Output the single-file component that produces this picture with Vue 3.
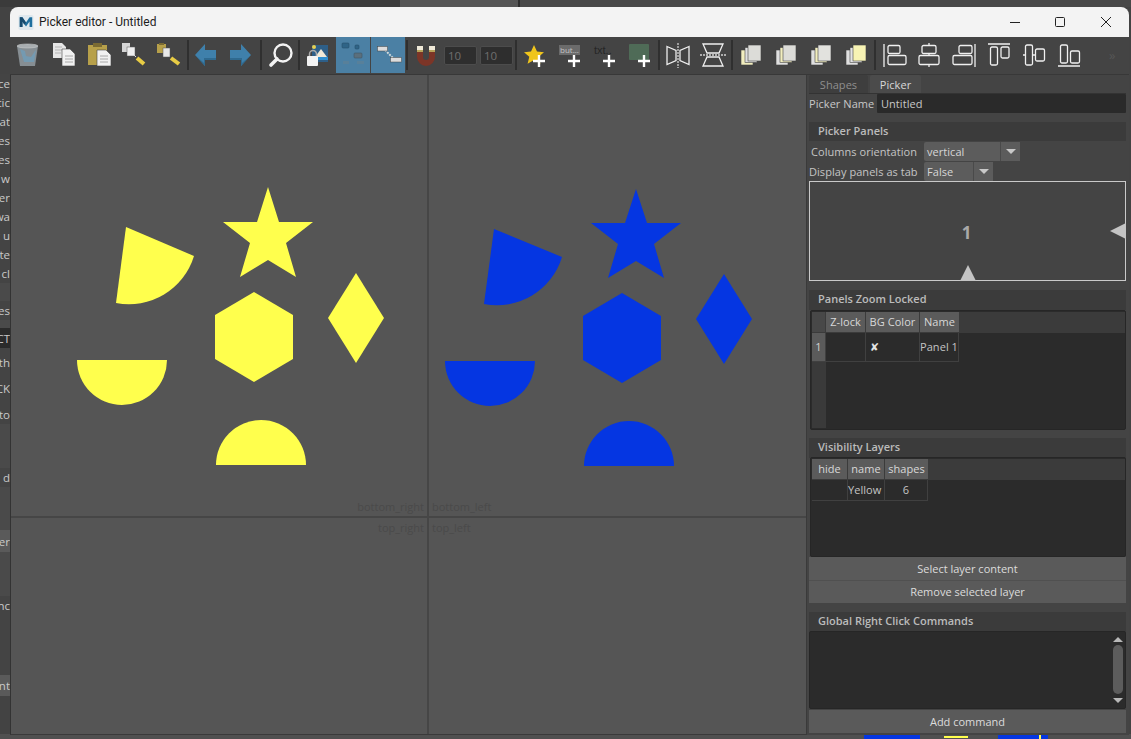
<script setup>
const leftRows = [
  { t: 'nce', h: 19 }, { t: 'tic', h: 19 }, { t: 'at', h: 19 }, { t: 'nes', h: 19 }, { t: 'es', h: 19 },
  { t: 'w', h: 19 }, { t: 'cer', h: 19 }, { t: 'wa', h: 19 }, { t: 't u', h: 19 }, { t: 'fte', h: 19 },
  { t: 'cl', h: 19 }, { t: '', h: 18, c: 'mid' }, { t: 'es', h: 19 }, { t: '', h: 8, c: 'mid' },
  { t: 'CT', h: 20, c: 'dark' }, { t: '', h: 5 }, { t: 'ath', h: 19 }, { t: '', h: 7 }, { t: 'CK', h: 19 },
  { t: '', h: 7 }, { t: 'to', h: 19 }, { t: '', h: 44, c: 'mid' }, { t: 'd', h: 19 }, { t: '', h: 43, c: 'mid' },
  { t: 'ter', h: 22, c: 'light' }, { t: '', h: 44, c: 'mid' }, { t: 'nc', h: 19 }, { t: '', h: 60 },
  { t: 'nt', h: 21, c: 'light' },
]
</script>

<template>
  <div class="desktop">
    <div class="top-strip"><span class="ts a"></span><span class="ts b"></span><span class="ts c"></span></div>
    <div class="left-strip">
      <div v-for="(r, i) in leftRows" :key="i" class="lrow" :class="r.c" :style="{ height: r.h + 'px' }">{{ r.t }}</div>
    </div>
    <div class="bottom-strip">
      <span class="bb b1"></span><span class="bb y1"></span><span class="bb b2"></span><span class="bb y2"></span>
    </div>

    <div class="window">
      <header class="titlebar">
        <svg class="app-icon" width="16" height="17" viewBox="0 0 18 18">
          <rect x="0.5" y="0.5" width="17" height="17" rx="2" fill="#dfe8ee" />
          <path d="M2 14V3h3l4 6 4-6h3v11h-3V8l-4 5.5L5 8v6z" fill="#1f6f9e" />
          <path d="M2 14V3h3l4 6-2 2.5L5 8v6z" fill="#174a6e" />
        </svg>
        <span class="title">Picker editor - Untitled</span>
        <div class="controls">
          <svg width="12" height="12" viewBox="0 0 12 12" class="ctl min"><path d="M1 6.5h10" stroke="#222" stroke-width="1" /></svg>
          <svg width="12" height="12" viewBox="0 0 12 12" class="ctl max"><rect x="1.5" y="1.5" width="9" height="9" rx="1" fill="none" stroke="#222" /></svg>
          <svg width="12" height="12" viewBox="0 0 12 12" class="ctl cls"><path d="M1 1l10 10M11 1L1 11" stroke="#222" stroke-width="1" /></svg>
        </div>
      </header>

      <div class="toolbar">
        <!-- trash -->
        <div class="tool w34"><svg viewBox="0 0 28 28"><path d="M4 5h21l-3 20H7z" fill="#868e93" /><path d="M7 8l5 2 1 5 5 1 4-6 1-1-2 12H11z" fill="#6d9dbb" opacity=".75" /><ellipse cx="14.500" cy="5" rx="10.500" ry="2" fill="#a8adb0" stroke="#c4c7c9" stroke-width=".6" /></svg></div>
        <!-- copy -->
        <div class="tool w40"><svg viewBox="0 0 28 28"><path d="M3 2h9l4 4v11H3z" fill="#e6e6e6" /><path d="M5 6h7M5 9h7M5 12h6" stroke="#b4b4b4" /><path d="M12 8h8l5 5v12H12z" fill="#f1f1f1" stroke="#444" stroke-width=".6" /><path d="M15 15h8M15 18h8M15 21h8" stroke="#a8a8a8" /></svg></div>
        <!-- paste -->
        <div class="tool w30"><svg viewBox="0 0 28 28"><rect x="3" y="4" width="19" height="20" fill="#b7a04a" /><rect x="8" y="2" width="9" height="4" fill="#7b6b33" /><path d="M12 9h9l5 5v11H12z" fill="#f1f1f1" stroke="#444" stroke-width=".6" /><path d="M15 15h8M15 18h8M15 21h8" stroke="#a8a8a8" /></svg></div>
        <!-- key copy -->
        <div class="tool w38"><svg viewBox="0 0 28 28"><rect x="3" y="2" width="8" height="9" fill="#d5d5d5" /><rect x="8" y="6" width="8" height="9" fill="#efefef" stroke="#555" stroke-width=".5" /><path d="M15 14l2 2" stroke="#ddd" stroke-width="1" /><path d="M18 17l7 6" stroke="#e8cc45" stroke-width="4" /></svg></div>
        <!-- key paste -->
        <div class="tool w30"><svg viewBox="0 0 28 28"><rect x="4" y="3" width="9" height="9" fill="#b7a04a" /><rect x="6" y="2" width="5" height="2" fill="#7b6b33" /><rect x="10" y="7" width="7" height="9" fill="#e8e8e8" stroke="#555" stroke-width=".5" /><path d="M18 17l8 6" stroke="#e8cc45" stroke-width="4" /></svg></div>
        <div class="sep m5"></div>
        <!-- arrows -->
        <div class="tool w32"><svg viewBox="0 0 28 28"><path d="M4 14L14 3v6h11v10H14v6z" fill="#3f80ab" /><path d="M4 14l10 11v-6h11v-2H13v5z" fill="#2f6a90" /></svg></div>
        <div class="tool w36"><svg viewBox="0 0 28 28"><path d="M26 14L16 3v6H5v10h11v6z" fill="#3f80ab" /><path d="M26 14L16 25v-6H5v-2h12v5z" fill="#2f6a90" /></svg></div>
        <div class="sep m3"></div>
        <!-- magnifier -->
        <div class="tool w36"><svg viewBox="0 0 28 28"><circle cx="17" cy="12" r="8.500" fill="none" stroke="#f3f3f3" stroke-width="2.400" /><path d="M11 18l-6 6" stroke="#f3f3f3" stroke-width="3.600" stroke-linecap="round" /></svg></div>
        <div class="sep"></div>
        <!-- lock + picture -->
        <div class="tool w36"><svg viewBox="0 0 28 28"><rect x="8" y="4" width="16" height="17" fill="#2e5f88" /><path d="M8 16h16v3H8z" fill="#2f8fd0" /><path d="M11 16l6-8 6 8z" fill="#efe9d8" /><circle cx="10" cy="6" r="2" fill="#e8d050" /><path d="M5.500 16v-3a3.500 3.500 0 017 0v3" fill="none" stroke="#aaa" stroke-width="1.500" /><rect x="3" y="15" width="11" height="10" rx="1" fill="#f3f3f3" /></svg></div>
        <div class="tool w34 on"><svg viewBox="0 0 28 28"><rect x="3" y="2" width="7" height="5" rx="1" fill="#2f6487" stroke="#254f6c" stroke-width=".6" /><rect x="16" y="4" width="4" height="4" rx="1" fill="#2f6487" stroke="#254f6c" stroke-width=".6" /><rect x="15" y="12" width="8" height="5" rx="1" fill="#5a6f7d" stroke="#3f5565" stroke-width=".6" /><rect x="4" y="20" width="6" height="3" fill="#58809a" /><rect x="18" y="20" width="7" height="3" fill="#58809a" /></svg></div>
        <div class="tool w34 on g1"><svg viewBox="0 0 28 28"><path d="M11 9l9 9" stroke="#cfd8dc" stroke-width="2" stroke-dasharray="2 1" /><rect x="3.500" y="5.500" width="10" height="4.500" fill="#dcdcdc" stroke="#444" stroke-width=".5" /><rect x="16.500" y="16.500" width="11" height="4.500" fill="#dcdcdc" stroke="#444" stroke-width=".5" /></svg></div>
        <div class="sep m1"></div>
        <!-- magnet -->
        <div class="tool w36"><svg viewBox="0 0 28 28"><path d="M8 11v5a6 6 0 0012 0v-5" fill="none" stroke="#7c3527" stroke-width="6" /><rect x="5" y="5" width="6" height="6" fill="#efe9d8" /><rect x="17" y="5" width="6" height="6" fill="#efe9d8" /><rect x="5" y="9" width="6" height="2" fill="#b8a45a" /><rect x="17" y="9" width="6" height="2" fill="#b8a45a" /></svg></div>
        <div class="numfield">10</div>
        <div class="numfield second">10</div>
        <div class="sep m2"></div>
        <!-- star + -->
        <div class="tool w34"><svg viewBox="0 0 28 28"><path d="M14 4l3 6.500 7 .7-5.300 4.600 1.700 7-6.400-3.700-6.400 3.700 1.700-7L4 11.200l7-.7z" fill="#f0c51c" /><path d="M19 14v12M13 20h12" stroke="#fff" stroke-width="2.400" /></svg></div>
        <!-- but + -->
        <div class="tool w38 relbox"><svg viewBox="0 0 28 28"><rect x="3" y="4" width="21" height="10" fill="#6b6b6b" /><text x="4" y="12" class="mini">but...</text><path d="M18 14v12M12 20h12" stroke="#fff" stroke-width="2.400" /></svg></div>
        <!-- txt + -->
        <div class="tool w34"><svg viewBox="0 0 28 28"><text x="2" y="13" class="txtmini">txt..</text><path d="M17 14v12M11 20h12" stroke="#fff" stroke-width="2.400" /></svg></div>
        <!-- rect + -->
        <div class="tool w34"><svg viewBox="0 0 28 28"><rect x="3" y="3" width="20" height="16" rx="1" fill="#4f6b57" /><path d="M18 14v12M12 20h12" stroke="#fff" stroke-width="2.400" /></svg></div>
        <div class="sep m1"></div>
        <!-- mirrors -->
        <div class="tool w36"><svg viewBox="0 0 28 28"><path d="M3 5.500l9 4v10l-9 4zM25 5.500l-9 4v10l9 4z" fill="none" stroke="#eee" stroke-width="1.300" /><path d="M14 2v25" stroke="#cfcfcf" stroke-width="1.300" stroke-dasharray="2 1" /></svg></div>
        <div class="tool w34"><svg viewBox="0 0 28 28"><path d="M4 3h20l-4 9H8zM8 16h12l4 9H4z" fill="none" stroke="#eee" stroke-width="1.300" /><path d="M1 14h26" stroke="#cfcfcf" stroke-width="1.300" stroke-dasharray="2 1" /></svg></div>
        <div class="sep m1"></div>
        <!-- layers -->
        <div class="tool w36"><svg viewBox="0 0 28 28"><rect x="4" y="9" width="12" height="15" fill="#f2eebf" stroke="#444" stroke-width=".6" /><rect x="8" y="6.500" width="12" height="15" fill="#e0e0e0" stroke="#444" stroke-width=".6" /><rect x="11" y="4" width="13" height="16" fill="#dcdcd8" stroke="#444" stroke-width=".6" /></svg></div>
        <div class="tool w34"><svg viewBox="0 0 28 28"><rect x="4" y="9" width="12" height="15" fill="#e0e0e0" stroke="#444" stroke-width=".6" /><rect x="8" y="6.500" width="12" height="15" fill="#f2eebf" stroke="#444" stroke-width=".6" /><rect x="11" y="4" width="13" height="16" fill="#dcdcd8" stroke="#444" stroke-width=".6" /></svg></div>
        <div class="tool w36"><svg viewBox="0 0 28 28"><rect x="4" y="9" width="12" height="15" fill="#e0e0e0" stroke="#444" stroke-width=".6" /><rect x="8" y="6.500" width="12" height="15" fill="#f2eebf" stroke="#444" stroke-width=".6" /><rect x="11" y="4" width="13" height="16" fill="#e2e2de" stroke="#444" stroke-width=".6" /></svg></div>
        <div class="tool w34"><svg viewBox="0 0 28 28"><rect x="4" y="9" width="12" height="15" fill="#e0e0e0" stroke="#444" stroke-width=".6" /><rect x="8" y="6.500" width="12" height="15" fill="#e4e4e4" stroke="#444" stroke-width=".6" /><rect x="11" y="4" width="13" height="16" fill="#f7f3b4" stroke="#444" stroke-width=".6" /></svg></div>
        <div class="sep m1"></div>
        <!-- align -->
        <div class="tool w36"><svg class="al" viewBox="0 0 28 28"><path d="M4 3v23" /><rect x="8" y="4.500" width="12" height="8" rx="1.500" /><rect x="8" y="14.500" width="18" height="9" rx="1.500" /></svg></div>
        <div class="tool w34"><svg class="al" viewBox="0 0 28 28"><path d="M14 2v2.500M14 12.500v2M14 23.500v2.500" /><rect x="7" y="4.500" width="14" height="8" rx="1.500" /><rect x="4" y="14.500" width="20" height="9" rx="1.500" /></svg></div>
        <div class="tool w36"><svg class="al" viewBox="0 0 28 28"><path d="M25 3v23" /><rect x="9" y="4.500" width="13" height="8" rx="1.500" /><rect x="3" y="14.500" width="19" height="9" rx="1.500" /></svg></div>
        <div class="tool w34"><svg class="al" viewBox="0 0 28 28"><path d="M3 3h22" /><rect x="5.500" y="6" width="7" height="18" rx="1.500" /><rect x="16" y="6" width="8" height="11" rx="1.500" /></svg></div>
        <div class="tool w36"><svg class="al" viewBox="0 0 28 28"><path d="M3 14h2M12 14h3M24 14h1" /><rect x="5.500" y="4" width="7" height="20" rx="1.500" /><rect x="15.500" y="8" width="9" height="12" rx="1.500" /></svg></div>
        <div class="tool w34"><svg class="al" viewBox="0 0 28 28"><path d="M3 25h22" /><rect x="5.500" y="4" width="7" height="18" rx="1.500" /><rect x="15.500" y="10" width="9" height="12" rx="1.500" /></svg></div>
        <span class="more">»</span>
      </div>

      <div class="body">
        <div class="canvas">
          <svg class="stage" width="795" height="660" viewBox="11 75 795 660">
            <path d="M428 75v660M11 517h795" stroke="#464646" stroke-width="2" fill="none" />
            <text x="424" y="511" text-anchor="end" class="guide">bottom_right</text>
            <text x="432" y="511" class="guide">bottom_left</text>
            <text x="424" y="532" text-anchor="end" class="guide">top_right</text>
            <text x="432" y="532" class="guide">top_left</text>
            <g fill="#ffff4d">
              <path d="M268 187l11 35h34l-27 21 10 34-28-17-28 17 10-34-27-21h34z" />
              <path d="M126 227L194 256A68 68 0 0 1 116 303Z" />
              <path d="M356 273l28 45-28 45-28-45z" />
              <path d="M254 292l39 23v44l-39 23-39-23v-44z" />
              <path d="M77 360h90a45 45 0 0 1-90 0z" />
              <path d="M216 465h90a45 45 0 0 0-90 0z" />
            </g>
            <g fill="#0536e2">
              <path d="M636 189l11 34h34l-27 21 10 34-28-17-28 17 10-34-27-21h34z" />
              <path d="M494 229L562 257A68 68 0 0 1 484 304Z" />
              <path d="M724 274l28 45-28 45-28-45z" />
              <path d="M622 293l39 23v44l-39 23-39-23v-44z" />
              <path d="M445 361h90a45 45 0 0 1-90 0z" />
              <path d="M584 466h90a45 45 0 0 0-90 0z" />
            </g>
          </svg>
        </div>

        <aside class="panel">
          <div class="tabs">
            <span class="tab">Shapes</span>
            <span class="tab active">Picker</span>
          </div>
          <div class="name-row">
            <label>Picker Name</label>
            <div class="name-input">Untitled</div>
          </div>

          <h3 class="band first">Picker Panels</h3>
          <div class="form-row">
            <span class="flabel">Columns orientation</span>
            <div class="combo wide"><span class="val">vertical</span><span class="arrow"><i></i></span></div>
          </div>
          <div class="form-row">
            <span class="flabel">Display panels as tab</span>
            <div class="combo narrow"><span class="val">False</span><span class="arrow"><i></i></span></div>
          </div>
          <div class="preview">
            <span class="num">1</span>
            <i class="tri-left"></i>
            <i class="tri-up"></i>
          </div>

          <h3 class="band">Panels Zoom Locked</h3>
          <div class="table t1">
            <div class="row head">
              <span class="c corner"></span><span class="c zl">Z-lock</span><span class="c bg">BG Color</span><span class="c nm">Name</span>
            </div>
            <div class="row cells">
              <span class="c corner side">1</span><span class="c zl"></span><span class="c bg mark"><b>✘</b></span><span class="c nm">Panel 1</span>
            </div>
            <div class="gutter"></div>
          </div>

          <h3 class="band">Visibility Layers</h3>
          <div class="table t2">
            <div class="row head">
              <span class="c hd">hide</span><span class="c nn">name</span><span class="c sh">shapes</span>
            </div>
            <div class="row cells short">
              <span class="c hd"></span><span class="c nn">Yellow</span><span class="c sh">6</span>
            </div>
          </div>
          <button class="btn one">Select layer content</button>
          <button class="btn two">Remove selected layer</button>

          <h3 class="band gl">Global Right Click Commands</h3>
          <div class="commands">
            <div class="scroll">
              <i class="sc-up"></i>
              <i class="sc-thumb"></i>
              <i class="sc-down"></i>
            </div>
          </div>
          <button class="btn three">Add command</button>
        </aside>
      </div>
    </div>
  </div>
</template>

<style>
html, body { margin: 0; background: #3e3e3e; overflow: hidden; }
</style>

<style scoped>
* { box-sizing: border-box; }
.desktop {
  position: relative; width: 1131px; height: 739px; overflow: hidden;
  background: #434343;
  font-family: "Open Sans", "Noto Sans", sans-serif;
}
.top-strip { position: absolute; left: 0; top: 0; width: 100%; height: 7px; display: flex; background: #3d3d3d; }
.ts { display: block; height: 7px; }
.ts.a { width: 400px; background: #3b3b3b; }
.ts.b { width: 120px; background: #555; border-right: 2px solid #2e2e2e; }
.ts.c { flex: 1; background: #484848; }
.left-strip { position: absolute; left: 0; top: 74px; width: 10px; overflow: hidden; display: flex; flex-direction: column; }
.lrow {
  width: 30px; margin-left: -20px; display: flex; align-items: center; justify-content: flex-end;
  font-size: 11.500px; color: #c9c9c9; white-space: nowrap; flex: none; background: #444;
}
.lrow.dark { background: #2b2b2b; }
.lrow.light { background: #5a5a5a; }
.lrow.mid { background: #4a4a4a; }
.bottom-strip { position: absolute; left: 0; bottom: 0; width: 100%; height: 5px; background: #505050; }
.bb { position: absolute; top: 0; height: 5px; }
.b1 { left: 864px; width: 56px; background: #0536e2; }
.y1 { left: 944px; width: 24px; height: 2px; top: 2px; background: #ffff4d; }
.b2 { left: 998px; width: 50px; background: #0536e2; }
.y2 { left: 1039px; width: 2px; background: #ffff4d; }

.window {
  position: absolute; left: 10px; top: 7px; width: 1119px; height: 728px;
  display: flex; flex-direction: column; background: #444;
  border-radius: 8px 8px 0 0; overflow: hidden;
}
.titlebar { height: 30px; flex: none; background: #f3f3f3; display: flex; align-items: center; padding-left: 8px; }
.app-icon { flex: none; }
.title { margin-left: 5px; font-size: 12px; color: #1c1c1c; font-family: Roboto, "Open Sans", sans-serif; }
.controls { margin-left: auto; display: flex; align-items: center; }
.ctl { display: block; }
.min { margin-right: 33px; }
.max { margin-right: 34px; }
.cls { margin-right: 17px; }

.toolbar { height: 38px; flex: none; background: #444; display: flex; align-items: stretch; border-bottom: 1px solid #383838; padding-bottom: 1px; }
.tool { display: flex; align-items: center; justify-content: center; flex: none; height: 36px; }
.tool svg { width: 28px; height: 28px; display: block; flex: none; }
.w30 { width: 30px; } .w32 { width: 32px; } .w34 { width: 34px; } .w36 { width: 36px; } .w38 { width: 38px; } .w40 { width: 40px; }
.tool.on { background: #4b80a4; }
.g1 { margin-left: 1px; }
.sep { width: 2px; height: 30px; background: #2f2f2f; flex: none; align-self: center; }
.m1 { margin-left: 1px; } .m2 { margin-left: 2px; } .m3 { margin-left: 3px; } .m5 { margin-left: 5px; }
.numfield {
  width: 33px; height: 19px; flex: none; align-self: center; background: #2e2e2e; border: 1px solid #4c4c4c; border-radius: 2px;
  color: #6e6e6e; font-size: 11.500px; line-height: 17px; padding-left: 3px;
}
.numfield.second { margin-left: 3px; }
.mini { font-size: 8px; fill: #c4c4c4; font-family: "Open Sans", sans-serif; }
.txtmini { font-size: 11px; fill: #262626; font-family: "Liberation Sans", sans-serif; }
.al path, .al rect { fill: none; stroke: #f0f0f0; stroke-width: 1.300; }
.more { margin-left: 23px; color: #565656; font-size: 13px; align-self: center; }

.body { flex: 1; display: flex; min-height: 0; }
.canvas { width: 796px; flex: none; background: #555; border-left: 1px solid #333; border-bottom: 1px solid #3a3a3a; position: relative; overflow: hidden; }
.stage { display: block; }
.guide { font-size: 11px; fill: #4a4a4a; font-family: "Open Sans", sans-serif; }

.panel {
  flex: 1; min-width: 0; background: #444; border-left: 1px solid #3a3a3a; display: flex; flex-direction: column;
  padding: 0 3px 0 2px; font-size: 11px; color: #c8c8c8; letter-spacing: .05px;
}
.tabs { height: 19px; flex: none; display: flex; align-items: flex-end; gap: 2px; border-bottom: 1px solid #333; }
.tab { height: 18px; line-height: 20px; color: #8f8f8f; background: #3e3e3e; border-radius: 2px 2px 0 0; width: 59px; text-align: center; }
.tab.active { color: #d8d8d8; background: #4b4b4b; width: 51px; }
.name-row { height: 20px; flex: none; display: flex; align-items: center; padding-bottom: 1px; }
.name-row label { width: 68px; color: #c8c8c8; }
.name-input { flex: 1; height: 19px; line-height: 19px; background: #2a2a2a; padding-left: 4px; color: #c8c8c8; border-radius: 1px; }
.band {
  margin: 8px 0 0; height: 20px; flex: none; line-height: 18px; background: #3b3b3b; padding-left: 9px;
  font-size: 11px; font-weight: 600; color: #bcbcbc; letter-spacing: 0;
}
.band.first { height: 19px; }
.band.gl { margin-top: 9px; }
.form-row { height: 20px; flex: none; display: flex; align-items: center; }
.form-row .flabel { width: 108px; text-align: right; white-space: nowrap; color: #c4c4c4; }
.combo { margin-left: 7px; height: 19px; display: flex; background: #5c5c5c; border-radius: 2px; }
.combo.wide { width: 96px; }
.combo.narrow { width: 69px; }
.val { flex: 1; padding-left: 3px; line-height: 19px; color: #d6d6d6; }
.arrow { width: 20px; background: #5c5c5c; border-left: 1px solid #4a4a4a; display: flex; align-items: center; justify-content: center; }
.arrow i { display: block; border-left: 5px solid transparent; border-right: 5px solid transparent; border-top: 5px solid #c8c8c8; }
.preview {
  position: relative; height: 100px; flex: none; margin: 0 0 1px; border: 1px solid #c9c9c9; background: #444;
  display: flex; align-items: center; justify-content: center;
}
.num { font-size: 17px; font-weight: 700; color: #a9a9a9; font-family: "Open Sans", sans-serif; letter-spacing: 0; transform: translate(-1px, 1px); }
.tri-left { position: absolute; right: -1px; top: 41px; border-top: 8px solid transparent; border-bottom: 8px solid transparent; border-right: 16px solid #c4c4c4; }
.tri-up { position: absolute; left: 150px; bottom: -1px; border-left: 8px solid transparent; border-right: 8px solid transparent; border-bottom: 16px solid #c4c4c4; }

.table { position: relative; flex: none; background: #2b2b2b; border: 1px solid #262626; border-radius: 2px; padding: 1px 0 0 1px; margin: 0 0 0 1px; }
.t1 { height: 120px; }
.t2 { height: 100px; margin-top: -1px; }
.row { display: flex; white-space: nowrap; }
.head { background: #3b3b3b; height: 21px; }
.head .c { background: #5b5b5b; color: #d8d8d8; margin-right: 1px; height: 20px; text-align: center; line-height: 20px; flex: none; }
.cells { height: 29px; }
.cells.short { height: 21px; }
.cells .c { border-right: 1px solid #404040; border-bottom: 1px solid #404040; text-align: center; line-height: 28px; color: #c4c4c4; height: 100%; flex: none; }
.short .c { line-height: 20px; }
.corner { width: 14px; flex: none; }
.head .corner { background: #484848; width: 13px; }
.cells .side { background: #5b5b5b; color: #d0d0d0; }
.zl { width: 40px; } .bg { width: 54px; } .nm { width: 39px; }
.head .zl { width: 39px; }
.head .bg { width: 53px; }
.head .nm { width: 39px; margin-right: 0; }
.cells .mark { text-align: left; padding-left: 4px; }
.mark b { color: #e4e4e4; font-size: 11px; font-family: "DejaVu Sans", sans-serif; }
.gutter { position: absolute; left: 1px; top: 51px; bottom: 1px; width: 14px; background: #3a3a3a; }
.cells .hd { width: 36px; } .cells .nn { width: 37px; padding-right: 3px; } .cells .sh { width: 43px; }
.head .hd { width: 35px; } .head .nn { width: 36px; } .head .sh { width: 43px; }
.btn {
  display: block; flex: none; width: 100%; border: 0; background: #5a5a5a; color: #dcdcdc; padding: 0; margin: 0;
  font: inherit; letter-spacing: 0; text-align: center;
}
.btn.one { height: 23px; }
.btn.two { height: 23px; box-shadow: inset 0 1px #505050; }
.btn.three { height: 23px; margin-top: 1px; }
.commands { flex: none; height: 78px; background: #2b2b2b; border: 1px solid #262626; border-radius: 2px; position: relative; margin-top: -1px; }
.scroll { position: absolute; right: 1px; top: 0; bottom: 0; width: 12px; display: flex; flex-direction: column; align-items: center; }
.sc-up { margin-top: 5px; border-left: 5px solid transparent; border-right: 5px solid transparent; border-bottom: 5px solid #b8b8b8; }
.sc-thumb { margin-top: 3px; width: 10px; height: 49px; border-radius: 5px; background: #5c5c5c; }
.sc-down { margin-top: 4px; border-left: 5px solid transparent; border-right: 5px solid transparent; border-top: 5px solid #b8b8b8; }
</style>
